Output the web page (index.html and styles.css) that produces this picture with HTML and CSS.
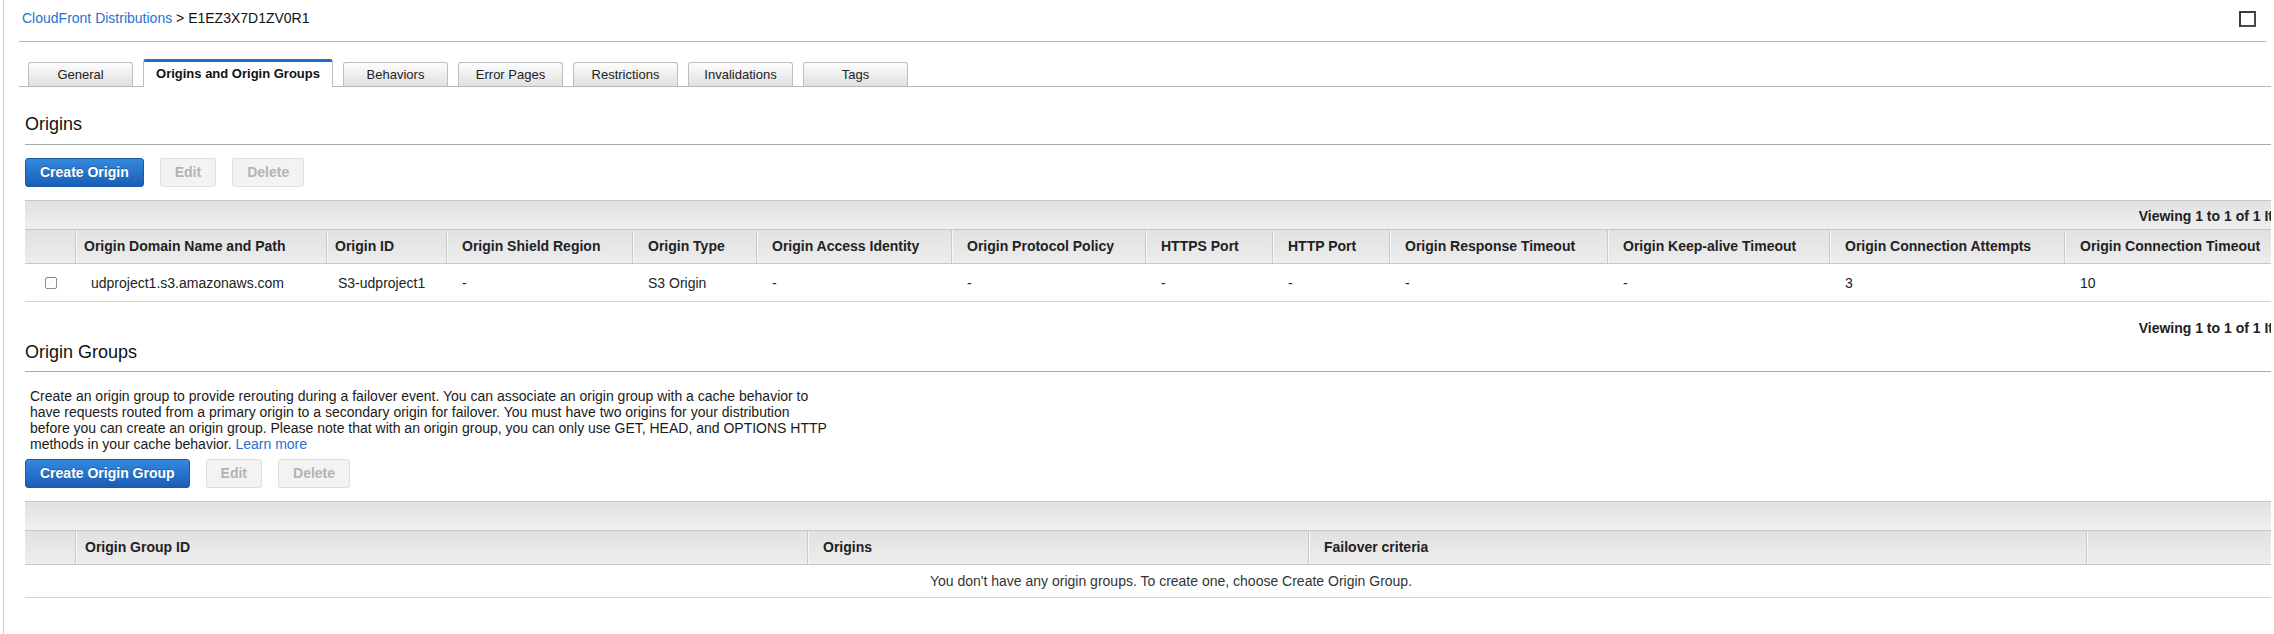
FILE: index.html
```html
<!DOCTYPE html>
<html lang="en">
<head>
<meta charset="utf-8">
<title>CloudFront Distributions - Origins</title>
<link rel="stylesheet" href="styles.css">
</head>
<body>
<div class="frame">
  <div class="crumbs">
    <div class="crumb-path"><a class="link" href="#">CloudFront Distributions</a> &gt; E1EZ3X7D1ZV0R1</div>
    <span class="window-btn"></span>
  </div>
  <div class="rule"></div>
  <div class="tabs">
    <div class="tab">General</div>
    <div class="tab active">Origins and Origin Groups</div>
    <div class="tab">Behaviors</div>
    <div class="tab">Error Pages</div>
    <div class="tab">Restrictions</div>
    <div class="tab">Invalidations</div>
    <div class="tab">Tags</div>
  </div>

  <section class="section">
    <h2 class="heading">Origins</h2>
    <div class="actions">
      <button class="btn primary">Create Origin</button>
      <button class="btn disabled">Edit</button>
      <button class="btn disabled">Delete</button>
    </div>
    <div class="grid">
      <div class="grid-bar">Viewing 1 to 1 of 1 Items</div>
      <div class="grid-head cols-origins">
        <div class="hcell"></div>
        <div class="hcell pad-9">Origin Domain Name and Path</div>
        <div class="hcell pad-9">Origin ID</div>
        <div class="hcell">Origin Shield Region</div>
        <div class="hcell">Origin Type</div>
        <div class="hcell">Origin Access Identity</div>
        <div class="hcell">Origin Protocol Policy</div>
        <div class="hcell">HTTPS Port</div>
        <div class="hcell">HTTP Port</div>
        <div class="hcell">Origin Response Timeout</div>
        <div class="hcell">Origin Keep-alive Timeout</div>
        <div class="hcell">Origin Connection Attempts</div>
        <div class="hcell">Origin Connection Timeout</div>
      </div>
      <div class="grid-row cols-origins">
        <div class="cell cb"><span class="check"></span></div>
        <div class="cell">udproject1.s3.amazonaws.com</div>
        <div class="cell pad-12">S3-udproject1</div>
        <div class="cell">-</div>
        <div class="cell">S3 Origin</div>
        <div class="cell">-</div>
        <div class="cell">-</div>
        <div class="cell">-</div>
        <div class="cell">-</div>
        <div class="cell">-</div>
        <div class="cell">-</div>
        <div class="cell">3</div>
        <div class="cell">10</div>
      </div>
    </div>
    <div class="pager">Viewing 1 to 1 of 1 Items</div>

    <h2 class="heading heading-groups">Origin Groups</h2>
    <p class="note">Create an origin group to provide rerouting during a failover event. You can associate an origin group with a cache behavior to have requests routed from a primary origin to a secondary origin for failover. You must have two origins for your distribution before you can create an origin group. Please note that with an origin group, you can only use GET, HEAD, and OPTIONS HTTP methods in your cache behavior. <a class="link" href="#">Learn more</a></p>
    <div class="actions actions-note">
      <button class="btn primary">Create Origin Group</button>
      <button class="btn disabled">Edit</button>
      <button class="btn disabled">Delete</button>
    </div>
    <div class="grid">
      <div class="grid-bar"></div>
      <div class="grid-head cols-groups">
        <div class="hcell"></div>
        <div class="hcell pad-10">Origin Group ID</div>
        <div class="hcell">Origins</div>
        <div class="hcell">Failover criteria</div>
        <div class="hcell"></div>
      </div>
      <div class="grid-empty">You don't have any origin groups. To create one, choose Create Origin Group.</div>
    </div>
  </section>
</div>
</body>
</html>
```
FILE: styles.css
```css
* { box-sizing: border-box; }

html, body {
  margin: 0;
  padding: 0;
  background: #fff;
}

body {
  font-family: "Liberation Sans", Arial, Helvetica, sans-serif;
  font-size: 14px;
  color: #222;
}

.frame {
  margin-left: 3px;
  border-left: 1px solid #c9c9c9;
  padding-left: 15px;
  width: 2268px;
  min-height: 634px;
  overflow: hidden;
}

.crumbs {
  display: flex;
  align-items: center;
  justify-content: space-between;
  height: 36px;
  padding: 0 15px 0 3px;
}

.crumb-path {
  font-size: 14px;
  line-height: 20px;
  color: #111;
}

.link {
  color: #1f73cf;
  text-decoration: none;
}

.window-btn {
  width: 17px;
  height: 16px;
  margin-top: 2px;
  border: 2px solid #3a3a3a;
  border-right-color: #4a4a4a;
  border-bottom-color: #4a4a4a;
  background: #fff;
}

.rule {
  height: 1px;
  background: #b7b7b7;
  margin: 5px 5px 0 0;
}

.tabs {
  display: flex;
  align-items: flex-end;
  gap: 10px;
  margin-top: 17px;
  padding-left: 9px;
  border-bottom: 1px solid #b7b7b7;
}

.tab {
  width: 105px;
  height: 24px;
  border: 1px solid #bdbdbd;
  border-bottom: 0;
  border-radius: 3px 3px 0 0;
  background: linear-gradient(#fdfdfd, #e0e0e0);
  font-size: 13px;
  line-height: 23px;
  text-align: center;
  color: #222;
  white-space: nowrap;
}

.tab.active {
  width: 190px;
  height: 28px;
  margin-bottom: -1px;
  border-top: 3px solid #1f6ec8;
  background: #fff;
  font-weight: bold;
  line-height: 24px;
  color: #111;
}

.section {
  padding-left: 6px;
}

.heading {
  margin: 26px 0 0;
  font-size: 18px;
  font-weight: normal;
  line-height: 22px;
  padding-bottom: 9px;
  border-bottom: 1px solid #a9a9a9;
  color: #111;
}

.heading-groups {
  margin-top: 3px;
  padding-bottom: 8px;
}

.actions {
  display: flex;
  gap: 16px;
  margin-top: 13px;
}

.actions-note {
  margin-top: 7px;
}

.btn {
  height: 29px;
  padding: 0 14px;
  border: 1px solid;
  border-radius: 3px;
  font-family: "Liberation Sans", Arial, Helvetica, sans-serif;
  font-size: 14px;
  font-weight: bold;
  line-height: 27px;
  white-space: nowrap;
}

.primary {
  background: linear-gradient(#3389df, #1a5eb6);
  border-color: #1b58a5;
  color: #fff;
  text-shadow: 0 -1px 0 rgba(0, 0, 0, 0.25);
}

.disabled {
  background: #f3f3f3;
  border-color: #dedede;
  color: #b3b3b3;
}

.grid {
  width: 2292px;
  margin-top: 13px;
}

.grid-bar {
  height: 29px;
  border-top: 1px solid #c8c8c8;
  background: linear-gradient(#e1e1e1, #efefef);
  text-align: right;
  padding-right: 16px;
  font-weight: bold;
  line-height: 31px;
  color: #222;
}

.grid-head {
  display: grid;
  height: 35px;
  border-top: 1px solid #c8c8c8;
  border-bottom: 1px solid #c8c8c8;
  background: linear-gradient(#e1e1e1, #ededed);
}

.cols-origins {
  grid-template-columns: 50px 251px 120px 186px 124px 195px 194px 127px 117px 218px 222px 235px 253px;
}

.cols-groups {
  grid-template-columns: 50px 732px 501px 778px 231px;
}

.hcell {
  padding-left: 16px;
  font-weight: bold;
  line-height: 33px;
  white-space: nowrap;
  overflow: hidden;
  color: #222;
  box-shadow: inset 1px 0 #cacaca, inset 2px 0 #f7f7f7;
}

.hcell:first-child {
  box-shadow: none;
}

.hcell.pad-9 { padding-left: 9px; }
.hcell.pad-10 { padding-left: 10px; }

.grid-row {
  display: grid;
  height: 38px;
  border-bottom: 1px solid #d3d3d3;
  align-items: center;
}

.cell {
  padding-left: 16px;
  white-space: nowrap;
  line-height: 20px;
  color: #222;
}

.cell.pad-12 {
  padding-left: 12px;
}

.cell.cb {
  padding-left: 20px;
  display: flex;
  align-items: center;
}

.check {
  width: 12px;
  height: 12px;
  border: 1px solid #8a8a8a;
  border-radius: 2px;
  background: #fff;
}

.pager {
  width: 2292px;
  margin-top: 16px;
  padding-right: 16px;
  text-align: right;
  font-weight: bold;
  line-height: 20px;
  color: #222;
}

.note {
  margin: 16px 0 0;
  padding-left: 5px;
  width: 805px;
  font-size: 14px;
  line-height: 16px;
  color: #1a1a1a;
}

.grid-empty {
  height: 33px;
  border-bottom: 1px solid #d3d3d3;
  text-align: center;
  font-size: 14px;
  line-height: 32px;
  color: #333;
}
```
